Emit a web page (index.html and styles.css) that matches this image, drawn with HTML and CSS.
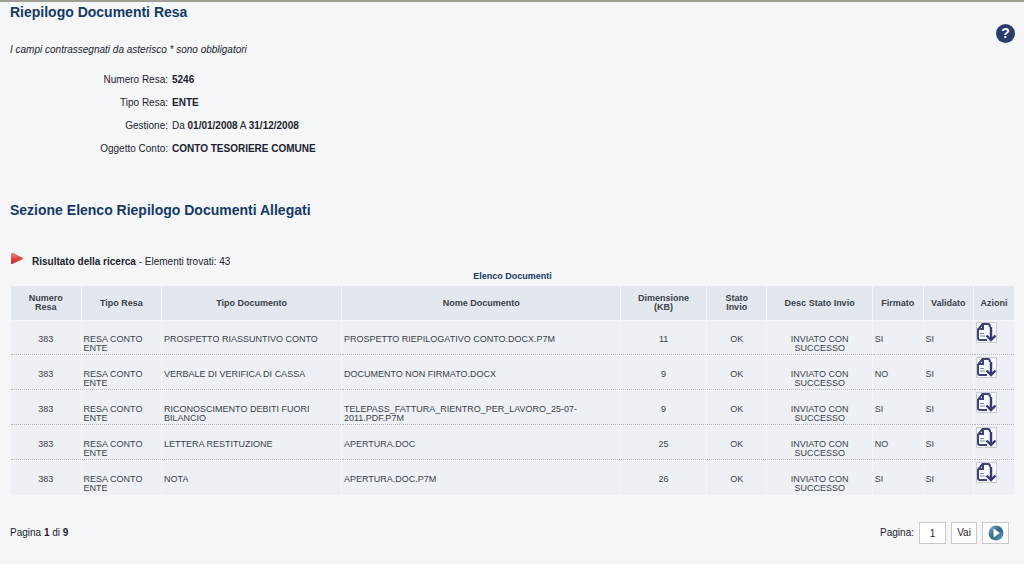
FILE: index.html
```html
<!DOCTYPE html>
<html lang="it">
<head>
<meta charset="utf-8">
<title>Riepilogo Documenti Resa</title>
<link rel="stylesheet" href="styles.css">
</head>
<body>
<svg class="sprite" aria-hidden="true">
  <symbol id="download" viewBox="0 0 21 21">
    <path d="M.5 20.500V.5H20.500V20.500z" fill="#f8f9fc" stroke="#c9cbd0"/>
    <path d="M11 18H4Q2 18 2 16V7.500L6.500 2H12Q14 2 14 5M7 2.500V7H2.500" fill="none" stroke="#3d4473" stroke-width="2"/>
    <path d="M15 5V18M10.500 13.500 15 18l4.500-4.500" fill="none" stroke="#343c6c" stroke-width="2.400"/>
    <path d="M4 11.500h4M4 14h5" stroke="#7c83a6"/>
  </symbol>
</svg>
<main class="page">
  <header class="top">
    <h1 class="title">Riepilogo Documenti Resa</h1>
    <button class="help" type="button" aria-label="Aiuto">?</button>
  </header>
  <p class="note">I campi contrassegnati da asterisco * sono obbligatori</p>
  <dl class="details">
    <dt>Numero Resa:</dt><dd><b>5246</b></dd>
    <dt>Tipo Resa:</dt><dd><b>ENTE</b></dd>
    <dt>Gestione:</dt><dd>Da <b>01/01/2008</b> A <b>31/12/2008</b></dd>
    <dt>Oggetto Conto:</dt><dd><b>CONTO TESORIERE COMUNE</b></dd>
  </dl>
  <h2 class="title section">Sezione Elenco Riepilogo Documenti Allegati</h2>
  <div class="result">
    <svg class="flag" viewBox="0 0 14 13" aria-hidden="true">
      <defs><linearGradient id="red" x2="0" y2="1"><stop offset="0" stop-color="#ef8d85"/><stop offset=".5" stop-color="#dc4a42"/><stop offset="1" stop-color="#c52422"/></linearGradient></defs>
      <path d="M1 2Q1 .5 3 .8L12 5.500Q14 6.500 12 7.500L2 12Q1 12.300 1 11z" fill="url(#red)"/>
    </svg>
    <p><b>Risultato della ricerca</b> - Elementi trovati: 43</p>
  </div>
  <table class="docs">
    <caption>Elenco Documenti</caption>
    <colgroup><col class="c-num"><col class="c-type"><col class="c-doc"><col class="c-name"><col class="c-size"><col class="c-state"><col class="c-desc"><col class="c-flag"><col class="c-flag"><col class="c-act"></colgroup>
    <thead>
      <tr><th>Numero Resa</th><th>Tipo Resa</th><th>Tipo Documento</th><th>Nome Documento</th><th>Dimensione (KB)</th><th>Stato Invio</th><th>Desc Stato Invio</th><th>Firmato</th><th>Validato</th><th>Azioni</th></tr>
    </thead>
    <tbody>
      <tr><td class="mid">383</td><td>RESA CONTO ENTE</td><td>PROSPETTO RIASSUNTIVO CONTO</td><td>PROSPETTO RIEPILOGATIVO CONTO.DOCX.P7M</td><td class="mid">11</td><td class="mid">OK</td><td class="mid">INVIATO CON SUCCESSO</td><td>SI</td><td>SI</td><td class="act"><button type="button" aria-label="Scarica"><svg><use href="#download"/></svg></button></td></tr>
      <tr><td class="mid">383</td><td>RESA CONTO ENTE</td><td>VERBALE DI VERIFICA DI CASSA</td><td>DOCUMENTO NON FIRMATO.DOCX</td><td class="mid">9</td><td class="mid">OK</td><td class="mid">INVIATO CON SUCCESSO</td><td>NO</td><td>SI</td><td class="act"><button type="button" aria-label="Scarica"><svg><use href="#download"/></svg></button></td></tr>
      <tr><td class="mid">383</td><td>RESA CONTO ENTE</td><td>RICONOSCIMENTO DEBITI FUORI BILANCIO</td><td>TELEPASS_FATTURA_RIENTRO_PER_LAVORO_25-07-<wbr>2011.PDF.P7M</td><td class="mid">9</td><td class="mid">OK</td><td class="mid">INVIATO CON SUCCESSO</td><td>SI</td><td>SI</td><td class="act"><button type="button" aria-label="Scarica"><svg><use href="#download"/></svg></button></td></tr>
      <tr><td class="mid">383</td><td>RESA CONTO ENTE</td><td>LETTERA RESTITUZIONE</td><td>APERTURA.DOC</td><td class="mid">25</td><td class="mid">OK</td><td class="mid">INVIATO CON SUCCESSO</td><td>NO</td><td>SI</td><td class="act"><button type="button" aria-label="Scarica"><svg><use href="#download"/></svg></button></td></tr>
      <tr><td class="mid">383</td><td>RESA CONTO ENTE</td><td>NOTA</td><td>APERTURA.DOC.P7M</td><td class="mid">26</td><td class="mid">OK</td><td class="mid">INVIATO CON SUCCESSO</td><td>SI</td><td>SI</td><td class="act"><button type="button" aria-label="Scarica"><svg><use href="#download"/></svg></button></td></tr>
    </tbody>
  </table>
  <footer class="pager">
    <p>Pagina <b>1</b> di <b>9</b></p>
    <form class="goto">
      <label for="page">Pagina:</label>
      <input id="page" type="text" value="1">
      <button class="go" type="button">Vai</button>
      <button class="next" type="button" aria-label="Pagina successiva">
        <svg viewBox="0 0 16 16"><defs><linearGradient id="blue" x2="1" y2="1"><stop offset="0" stop-color="#8fb4c6"/><stop offset=".5" stop-color="#2f6686"/><stop offset="1" stop-color="#5fa6c2"/></linearGradient></defs><circle cx="8" cy="8" r="7.500" fill="url(#blue)"/><path d="M5.500 3.500v9L12 8z" fill="#fff"/></svg>
      </button>
    </form>
  </footer>
</main>
</body>
</html>
```
FILE: styles.css
```css
* { box-sizing: border-box; }
html { background: #fff; }
body {
  margin: 0;
  font: 10px/12px "Liberation Sans", Arial, sans-serif;
  color: #1c222c;
}
h1, h2, p, dl, dd { margin: 0; }
button { padding: 0; font: inherit; color: inherit; cursor: pointer; }
.sprite { position: absolute; width: 0; height: 0; }
.page {
  border-top: 2px solid #a09f94;
  padding: 2px 9px 20px 10px;
  background: #f4f6f8;
}
.top { display: flex; justify-content: space-between; height: 39px; }
.title { font-size: 14px; line-height: 17px; color: #173a63; }
.help {
  align-self: flex-end;
  width: 19px;
  height: 19px;
  border: 0;
  border-radius: 50%;
  background: #2c3c68;
  color: #fff;
  font-size: 14px;
  line-height: 19px;
  font-weight: bold;
}
.note { margin-top: 1px; font-style: italic; }
.details {
  display: grid;
  grid-template-columns: 158px 1fr;
  column-gap: 4px;
  row-gap: 11px;
  margin-top: 18px;
}
.details dt { text-align: right; }
.section { margin-top: 47px; }
.result { display: flex; gap: 8px; margin-top: 33px; }
.result p { margin-top: 4px; }
.flag { width: 14px; height: 13px; }
.docs {
  width: 100%;
  table-layout: fixed;
  border-collapse: separate;
  border-spacing: 1px;
  font-size: 9px;
  line-height: 9px;
  color: #3a3f48;
}
.docs caption { padding: 2px 0 3px; line-height: 12px; font-weight: bold; color: #173a63; }
.docs th { height: 34px; padding: 0 12px; background: #e3e8ee; }
.docs th:nth-child(n+8) { padding: 0; }
.docs td {
  height: 34px;
  padding: 14px 2px 1px;
  vertical-align: top;
  background: #edf0f5;
  border-bottom: 1px dotted #b4b8be;
}
.docs tbody tr:last-child td { border-bottom: 0; }
.docs .mid { padding-left: 0; padding-right: 0; text-align: center; }
.docs .act { padding: 1px 2px; }
.act button { display: block; border: 0; background: none; }
.act svg { display: block; width: 21px; height: 21px; }
.c-num { width: 7%; }
.c-type { width: 8%; }
.c-doc { width: 18%; }
.c-name { width: 28%; }
.c-size { width: 8.5%; }
.c-state { width: 6%; }
.c-desc { width: 10.5%; }
.c-flag { width: 5%; }
.c-act { width: 4%; }
.pager {
  display: flex;
  justify-content: space-between;
  align-items: center;
  margin-top: 26px;
  padding-right: 6px;
}
.goto { display: flex; align-items: center; gap: 5px; }
.goto input, .goto button {
  height: 22px;
  border: 1px solid #c8cacc;
  background: #fff;
}
.goto input { width: 27px; padding: 0; text-align: center; font: inherit; color: inherit; }
.goto .go { width: 26px; }
.goto .next { display: flex; align-items: center; justify-content: center; width: 27px; }
.next svg { width: 16px; height: 16px; }
```
